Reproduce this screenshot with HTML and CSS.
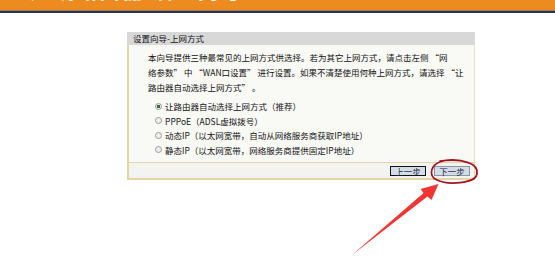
FILE: index.html
```html
<!DOCTYPE html>
<html lang="zh-CN">
<head>
    <meta charset="UTF-8">
    <title>设置向导-上网方式</title>
    <link rel="stylesheet" href="styles.css">
</head>
<body>
    <header class="top-bar">
        <div class="brand">无线路由器 设置向导</div>
    </header>

    <main class="page">
        <form class="wizard">
            <div class="wizard-title">设置向导-上网方式</div>
            <div class="wizard-body">
                <p class="intro">
                    本向导提供三种最常见的上网方式供选择。若为其它上网方式，请点击左侧 “网<br>
                    络参数” 中 “WAN口设置” 进行设置。如果不清楚使用何种上网方式，请选择 “让<br>
                    路由器自动选择上网方式” 。
                </p>
                <ul class="options">
                    <li><label><input type="radio" name="wan" checked> 让路由器自动选择上网方式（推荐）</label></li>
                    <li><label><input type="radio" name="wan"> PPPoE（ADSL虚拟拨号）</label></li>
                    <li><label><input type="radio" name="wan"> 动态IP（以太网宽带，自动从网络服务商获取IP地址）</label></li>
                    <li><label><input type="radio" name="wan"> 静态IP（以太网宽带，网络服务商提供固定IP地址）</label></li>
                </ul>
            </div>
            <div class="wizard-actions">
                <button type="button" class="btn btn-prev">上一步</button>
                <button type="submit" class="btn">下一步</button>
            </div>
        </form>
    </main>

    <!-- hand drawn annotation -->
    <svg class="annotation" width="555" height="278" viewBox="0 0 555 278">
        <path d="M440 161 C462 158 479 163 477 174 C475 184 447 185 437 180 C428 176 430 164 443 161 C452 159 461 160 469 163" fill="none" stroke="#a3131f" stroke-width="1.7" stroke-linecap="round"/>
        <polygon points="352,255 423.5,193 420.5,189 438.5,184 431.5,200 427.5,196.5" fill="#f03535"/>
    </svg>
</body>
</html>
```

FILE: styles.css
```css
* {
    margin: 0;
    padding: 0;
    box-sizing: border-box;
}

body {
    position: relative;
    width: 555px;
    height: 278px;
    overflow: hidden;
    background-color: #ffffff;
    color: #111111;
    font-family: "Noto Sans CJK SC", "Liberation Sans", sans-serif;
    font-size: 8.5px;
}

.top-bar {
    height: 13px;
    overflow: hidden;
    background: linear-gradient(#ec8b1f 0 10px, #a07a50 10px 11px, #2c3459 11px 13px);
}

.brand {
    margin: -21px 0 0 30px;
    color: #ffffff;
    font-size: 21px;
    font-weight: bold;
    line-height: 21px;
    letter-spacing: 2px;
    white-space: nowrap;
}

.page {
    padding: 19px 0 0 127px;
}

.wizard {
    width: 348px;
}

.wizard-title {
    height: 13px;
    padding-left: 6px;
    background-color: #d8d8d8;
    line-height: 13px;
}

.wizard-body {
    height: 117px;
    padding: 5px 0 0 19px;
    background-color: #f9f9f6;
    border-left: 2px solid #e3d6a6;
    border-right: 1px solid #ebe2c4;
}

.intro {
    line-height: 15px;
}

.options {
    list-style: none;
    margin-top: 4px;
    padding-left: 7px;
}

.options li {
    line-height: 14.5px;
}

.options label {
    display: flex;
    align-items: center;
    gap: 3px;
}

.options input {
    appearance: none;
    width: 7px;
    height: 7px;
    border: 1px solid #9a9a9a;
    border-radius: 50%;
    background-color: #eeeeee;
}

.options input:checked {
    background: radial-gradient(circle, #3d6b3d 0 1.5px, #eeeeee 2px);
}

.wizard-actions {
    display: flex;
    justify-content: flex-end;
    align-items: center;
    gap: 8px;
    height: 18px;
    padding-right: 4px;
    background-color: #f3f3f1;
    border: 2px solid #e3d6a6;
    border-top-width: 1px;
    border-right-width: 1px;
}

.btn {
    width: 36px;
    height: 10px;
    padding: 0;
    background-color: #d3dde8;
    border: 1px solid #8a96a6;
    color: #1c2433;
    font-family: inherit;
    font-size: 8.5px;
    line-height: 8px;
}

.btn-prev {
    border-color: #111111;
}

.annotation {
    position: absolute;
    top: 0;
    left: 0;
    pointer-events: none;
}
```
